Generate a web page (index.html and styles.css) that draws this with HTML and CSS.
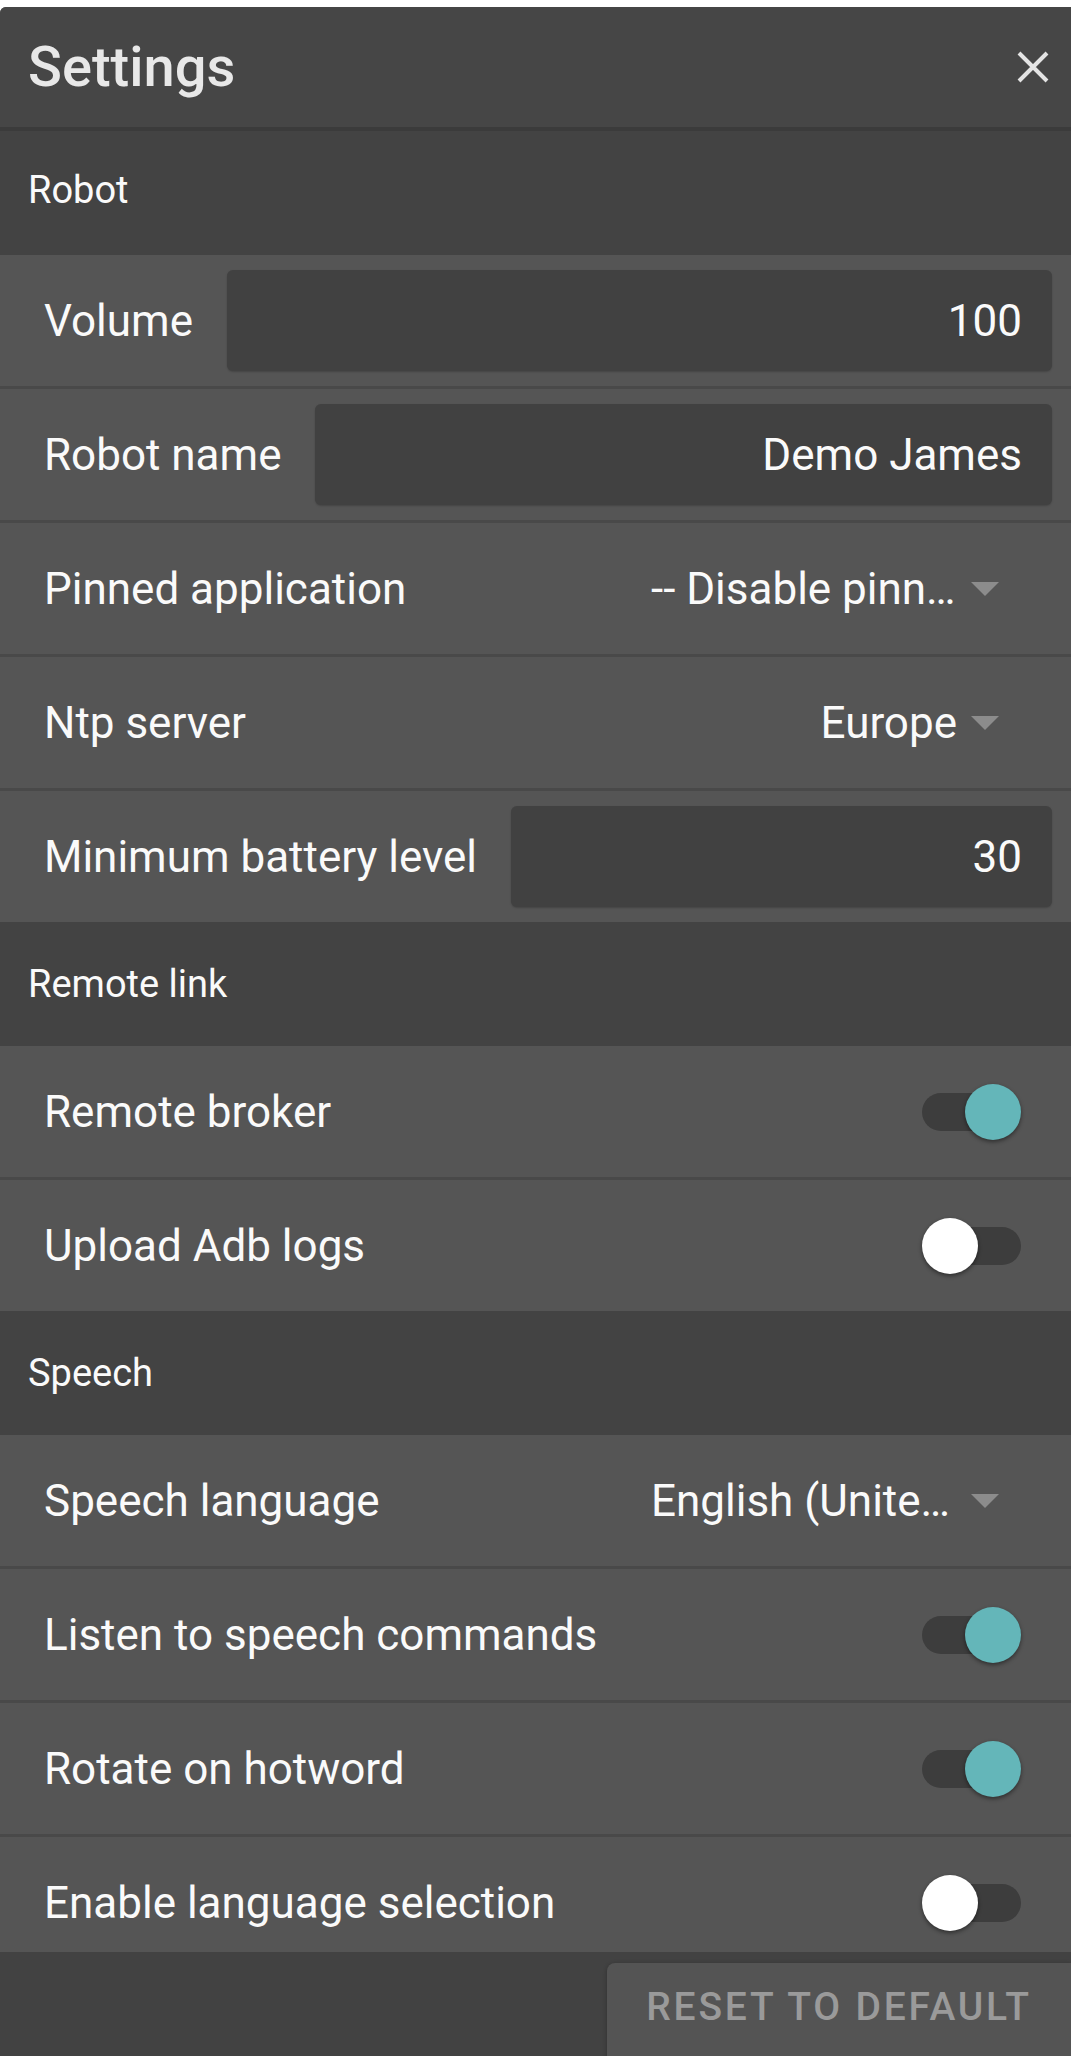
FILE: index.html
```html
<!DOCTYPE html>
<html lang="en">
<head>
  <meta charset="utf-8">
  <title>Settings</title>
  <link rel="stylesheet" href="styles.css">
</head>
<body>
    <div class="panel">
        <div class="panel-header">
            <h1>Settings</h1>
            <button class="close" aria-label="Close">
                <svg width="32" height="32" viewBox="0 0 32 32"><path d="M2 2L30 30M30 2L2 30" stroke="#e4e4e4" stroke-width="4"/></svg>
            </button>
        </div>

        <div class="list">
            <div class="section">Robot</div>
            <div class="row">
                <span class="label">Volume</span>
                <div class="field">100</div>
            </div>
            <div class="row">
                <span class="label">Robot name</span>
                <div class="field">Demo James</div>
            </div>
            <div class="row">
                <span class="label">Pinned application</span>
                <div class="select"><span class="value">-- Disable pinning --</span><span class="arrow"></span></div>
            </div>
            <div class="row">
                <span class="label">Ntp server</span>
                <div class="select"><span class="value">Europe</span><span class="arrow"></span></div>
            </div>
            <div class="row last">
                <span class="label">Minimum battery level</span>
                <div class="field">30</div>
            </div>

            <div class="section">Remote link</div>
            <div class="row">
                <span class="label">Remote broker</span>
                <div class="toggle on"><span class="thumb"></span></div>
            </div>
            <div class="row last">
                <span class="label">Upload Adb logs</span>
                <div class="toggle"><span class="thumb"></span></div>
            </div>

            <div class="section">Speech</div>
            <div class="row">
                <span class="label">Speech language</span>
                <div class="select"><span class="value">English (United States)</span><span class="arrow"></span></div>
            </div>
            <div class="row">
                <span class="label">Listen to speech commands</span>
                <div class="toggle on"><span class="thumb"></span></div>
            </div>
            <div class="row">
                <span class="label">Rotate on hotword</span>
                <div class="toggle on"><span class="thumb"></span></div>
            </div>
            <div class="row last">
                <span class="label">Enable language selection</span>
                <div class="toggle"><span class="thumb"></span></div>
            </div>
        </div>

        <div class="footer">
            <button class="reset">Reset to default</button>
        </div>
    </div>
</body>
</html>
```

FILE: styles.css
```css
html, body {
    margin: 0;
    height: 100%;
    background: #fff;
}
body {
    font-family: "Roboto", "Liberation Sans", sans-serif;
    color: #fafafa;
    -webkit-font-smoothing: antialiased;
}
.panel {
    margin-top: 7px;
    height: calc(100% - 7px);
    display: flex;
    flex-direction: column;
    background: #555;
    border-top-left-radius: 6px;
    overflow: hidden;
}
.panel-header {
    flex: none;
    height: 120px;
    display: flex;
    align-items: center;
    justify-content: space-between;
    padding: 0 22px 0 28px;
    background: #464646;
    border-bottom: 4px solid #3b3b3b;
}
h1 {
    margin: 0;
    font-size: 56px;
    font-weight: 500;
    color: #e8e8e8;
}
.close {
    background: none;
    border: 0;
    padding: 0;
    width: 32px;
    height: 32px;
    display: flex;
}

.list {
    flex: 1;
    overflow: hidden;
}
.section {
    height: 124px;
    display: flex;
    align-items: center;
    padding-left: 28px;
    font-size: 38px;
    background: #434343;
}
.section:first-child {
    padding-bottom: 6px;
    height: 118px;
}
.row {
    height: 131px;
    display: flex;
    align-items: center;
    padding: 0 19px 0 44px;
    background: #555;
    border-bottom: 3px solid #494949;
}
.row.last {
    border-bottom: 0;
}
.label {
    flex: none;
    font-size: 44px;
    white-space: nowrap;
}

/* text inputs */
.field {
    flex: 1;
    height: 101px;
    margin-left: 34px;
    display: flex;
    align-items: center;
    justify-content: flex-end;
    padding-right: 30px;
    font-size: 44px;
    background: #414141;
    border-radius: 6px;
    box-shadow: 0 1px 2px rgba(0,0,0,.2);
}

/* selects */
.select {
    margin-left: auto;
    margin-right: 53px;
    display: flex;
    align-items: center;
    font-size: 44px;
}
.select .value {
    max-width: 306px;
    overflow: hidden;
    text-overflow: ellipsis;
    white-space: nowrap;
}
.arrow {
    margin-left: 14px;
    width: 0;
    height: 0;
    border-left: 14px solid transparent;
    border-right: 14px solid transparent;
    border-top: 14px solid #8c8c8c;
}

/* switches */
.toggle {
    position: relative;
    margin-left: auto;
    margin-right: 31px;
    width: 99px;
    height: 38px;
    border-radius: 19px;
    background: #3d3d3d;
}
.thumb {
    position: absolute;
    top: -9px;
    left: 0;
    width: 56px;
    height: 56px;
    border-radius: 50%;
    background: #fff;
    box-shadow: 0 2px 4px rgba(0,0,0,.45);
}
.toggle.on .thumb {
    left: 43px;
    background: #64b6b9;
}

.footer {
    flex: none;
    height: 104px;
    display: flex;
    justify-content: flex-end;
    align-items: flex-start;
    padding-top: 11px;
    box-sizing: border-box;
    background: #424242;
}
.reset {
    width: 464px;
    height: 100px;
    padding: 0 0 12px 0;
    border: 0;
    border-radius: 8px 0 0 0;
    background: #545454;
    box-shadow: 0 1px 4px rgba(0,0,0,.3);
    font-family: "Roboto", "Liberation Sans", sans-serif;
    font-size: 39px;
    font-weight: 500;
    letter-spacing: 2.8px;
    text-transform: uppercase;
    color: #9a9a9a;
}
```
